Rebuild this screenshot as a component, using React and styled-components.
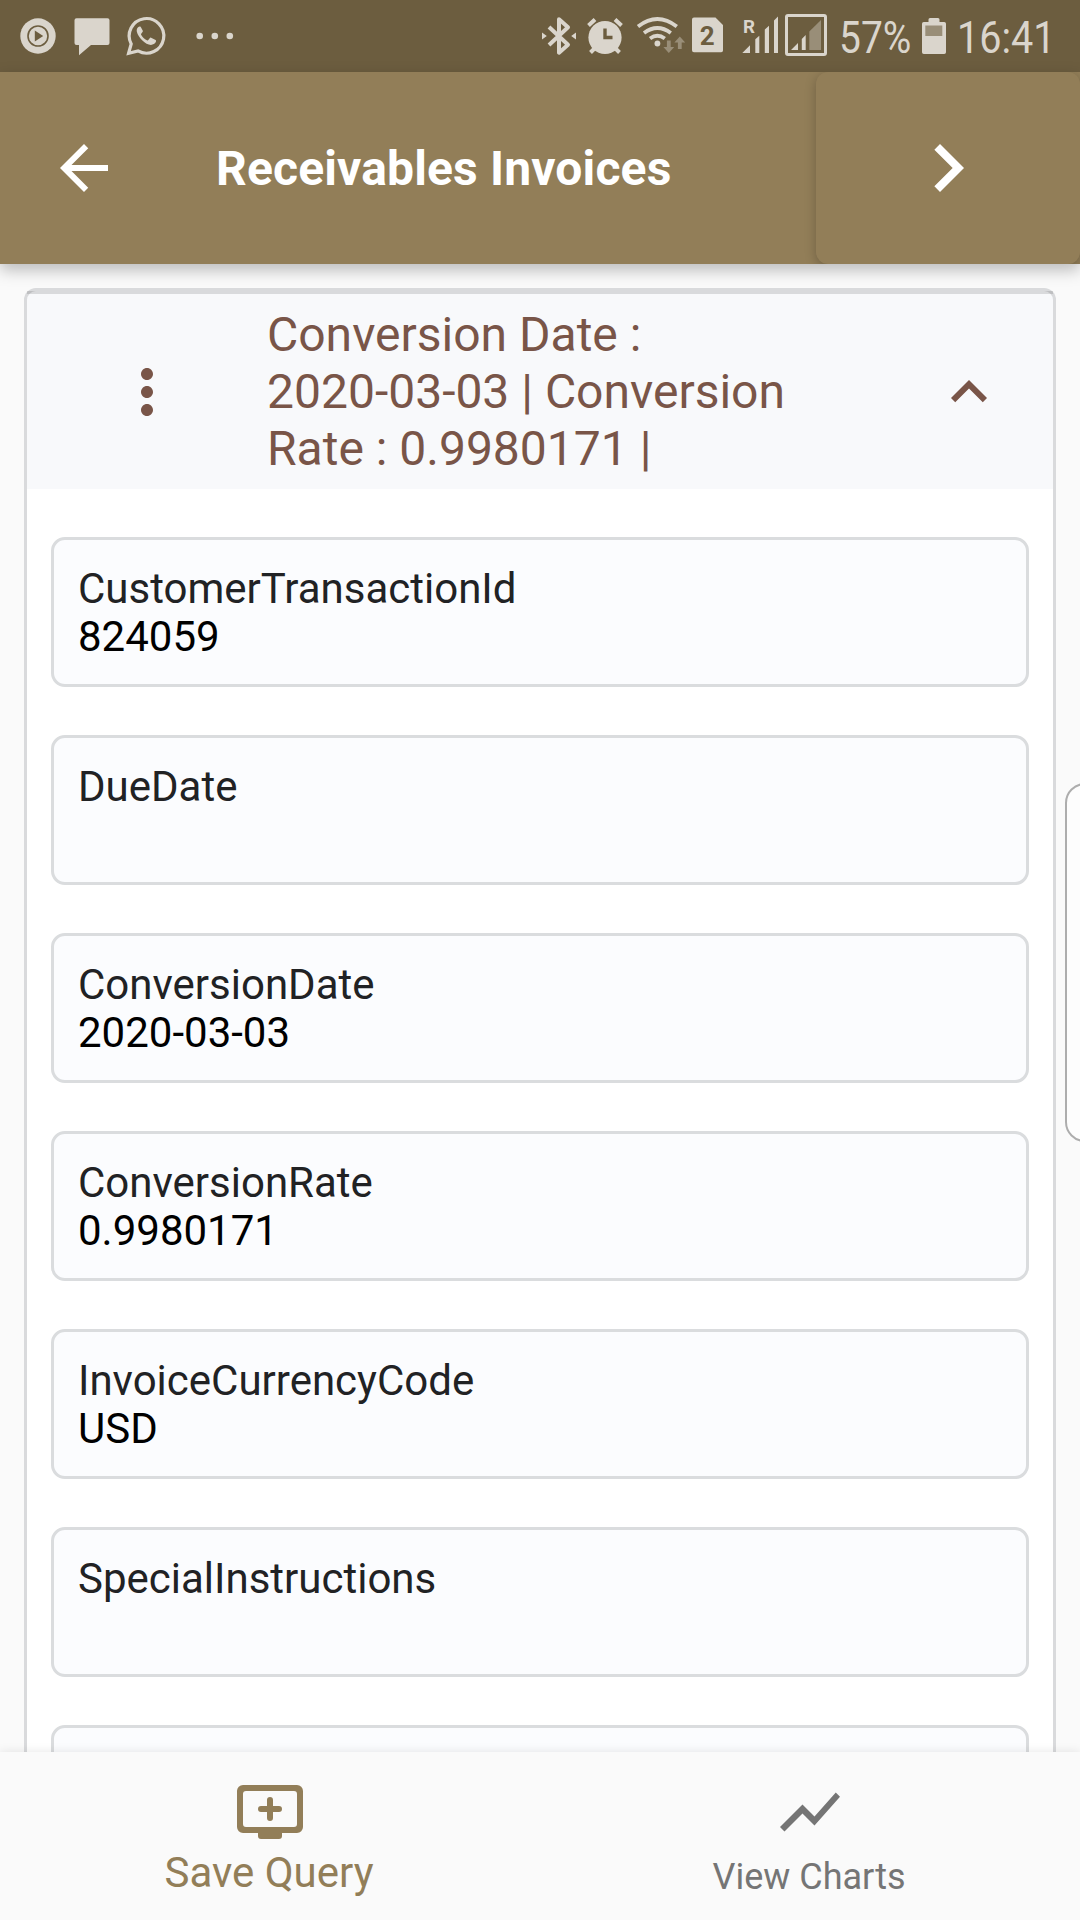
import React from "react";
import styled, { createGlobalStyle } from "styled-components";

const GlobalStyle = createGlobalStyle`
  * { box-sizing: border-box; }
  body { margin: 0; background: #fafafa; }
`;

const Screen = styled.div`
  position: relative;
  display: flex;
  flex-direction: column;
  width: 1080px;
  height: 1920px;
  overflow: hidden;
  background: #fafafa;
  font-family: Roboto, "Liberation Sans", sans-serif;
`;

const StatusBar = styled.header`
  display: flex;
  justify-content: space-between;
  flex: none;
  height: 72px;
  padding: 0 30px 0 14px;
  background: #6c5d3f;
  color: #dad5cc;
`;

const StatusGroup = styled.div`
  display: flex;
  height: 72px;
`;

const TileSvg = styled.svg`
  display: block;
  flex: none;
  fill: currentColor;
`;

const StatusText = styled.div`
  flex: none;
  width: ${(p) => p.$width}px;
  height: 72px;
  font-size: 45px;
  line-height: 75px;
  white-space: nowrap;

  span {
    display: inline-block;
    transform: scaleX(${(p) => p.$stretch});
    transform-origin: left center;
  }
`;

const AppBar = styled.div`
  position: relative;
  z-index: 2;
  display: flex;
  align-items: center;
  flex: none;
  height: 192px;
  padding-left: 48px;
  background: #927e58;
  color: #fff;
  box-shadow: 0 6px 15px rgba(0, 0, 0, 0.26);
`;

const AppBarTitle = styled.h1`
  flex: 1;
  margin: 0 0 0 96px;
  padding-top: 2px;
  font-size: 48px;
  font-weight: 700;
  line-height: 56px;
  letter-spacing: 0.15px;
  white-space: nowrap;
`;

const NextSlot = styled.div`
  width: 264px;
  height: 192px;
  clip-path: inset(0 0 0 -24px);
`;

const NextButton = styled.button`
  display: flex;
  align-items: center;
  justify-content: center;
  width: 100%;
  height: 100%;
  padding: 0;
  border: 0;
  border-radius: 12px;
  background: #927e58;
  color: #fff;
  box-shadow: 0 3px 12px rgba(0, 0, 0, 0.24);
`;

const Icon = styled.svg`
  display: block;
  flex: none;
  width: ${(p) => p.$size || 72}px;
  height: ${(p) => p.$size || 72}px;
  fill: currentColor;
`;

const Content = styled.main`
  flex: 1;
  min-height: 0;
  overflow: hidden;
  padding: 24px 24px 0;
`;

const Card = styled.section`
  border: 3px solid rgba(0, 0, 0, 0.12);
  border-radius: 12px;
  background: #f8f9fb;
`;

const CardDivider = styled.div`
  height: 3px;
  background: rgba(0, 0, 0, 0.12);
`;

const CardHeader = styled.div`
  display: flex;
  align-items: center;
  height: 195px;
  padding: 0 48px 0 84px;
  color: #795548;
`;

const CardTitle = styled.h2`
  flex: 1;
  margin: 0 0 0 84px;
  font-size: 48px;
  font-weight: 400;
  line-height: 57px;
  white-space: pre-line;
`;

const CardBody = styled.div`
  display: flex;
  flex-direction: column;
  gap: 48px;
  padding: 48px 24px;
  background: #fff;
`;

const Field = styled.div`
  flex: none;
  height: 150px;
  padding: 25px 24px 0;
  border: 3px solid #dadcde;
  border-radius: 14px;
  background: #fbfcfe;
  font-size: 42px;
  line-height: 48px;
`;

const FieldLabel = styled.div`
  color: #212224;
`;

const FieldValue = styled.div`
  color: #000;
`;

const EdgeHandle = styled.div`
  position: absolute;
  z-index: 1;
  top: 783px;
  left: 1065px;
  width: 60px;
  height: 359px;
  border: 2px solid #adadad;
  border-radius: 20px;
  background: #fdfdfd;
`;

const BottomNav = styled.nav`
  position: relative;
  z-index: 1;
  display: grid;
  grid-template-columns: 1fr 1fr;
  flex: none;
  height: 168px;
  background: #fafafa;
  box-shadow: 0 0 10px rgba(0, 0, 0, 0.1);
`;

const NavItem = styled.div`
  display: flex;
  flex-direction: column;
  align-items: center;
  gap: ${(p) => (p.$active ? 1 : 5)}px;
  padding-top: 24px;
  color: ${(p) => (p.$active ? "#927e58" : "#757575")};
  font-size: ${(p) => (p.$active ? 42 : 36)}px;
  line-height: 48px;
`;

const NavLabel = styled.span`
  padding-right: 2px;
  white-space: nowrap;
`;

function Tile({ x, w, children }) {
  return (
    <TileSvg width={w} height="72" viewBox={`${x} 0 ${w} 72`}>
      {children}
    </TileSvg>
  );
}

const BAR = "#6c5d3f";
const DIM = "#998e78";

function NotificationIcons() {
  return (
    <StatusGroup>
      <Tile x={14} w={48}>
        <circle cx="38" cy="36" r="17.7" />
        <circle cx="38" cy="36" r="10" fill="none" stroke={BAR} strokeWidth="1.6" />
        <path d="M34.8 30.6v10.8l8.4-5.4z" fill={BAR} />
      </Tile>
      <Tile x={62} w={56}>
        <path d="M76.500 18.300h31a2 2 0 0 1 2 2v22.700a2 2 0 0 1-2 2H91l-12 10.200V45h-2.500a2 2 0 0 1-2-2V20.300a2 2 0 0 1 2-2z" />
      </Tile>
      <Tile x={118} w={60}>
        <path
          d="M128.600 53.300l2.600-9.400a17.300 17.300 0 1 1 6.800 7z"
          fill="none"
          stroke="currentColor"
          strokeWidth="3.2"
        />
        <path d="M140.200 26.600c-.5-.2-1.500-.1-2.100.6-1 1-1.600 2.500-1.300 4.300.7 3.200 3 6.400 5.600 8.900 2.700 2.500 5.700 4.400 8.500 4.500 2 0 4.400-1.300 5-3.100.2-.9.200-1.500-.3-1.800l-4.500-2.300c-.6-.2-1 0-1.400.5l-1.400 1.800c-.4.5-.9.5-1.400.2-2.500-1.200-4.400-3-5.800-5.500-.2-.5-.1-.8.3-1.200l1.300-1.700c.2-.4.200-.7 0-1.200l-1.800-3.400c-.2-.4-.4-.5-.7-.6z" />
      </Tile>
      <Tile x={178} w={62}>
        <circle cx="199.700" cy="36" r="3.300" />
        <circle cx="214.800" cy="36" r="3.300" />
        <circle cx="229.800" cy="36" r="3.300" />
      </Tile>
    </StatusGroup>
  );
}

function SystemIcons() {
  return (
    <StatusGroup>
      <Tile x={536} w={46}>
        <path
          d="M549 27l19 17.700-9 8V19.300l9 8L549 45"
          fill="none"
          stroke="currentColor"
          strokeWidth="4"
          strokeLinejoin="round"
        />
        <path d="M542 32.500l4.800 3.500-4.800 3.500zM576 32.500L571.200 36l4.800 3.500z" />
      </Tile>
      <Tile x={582} w={50}>
        <circle cx="605" cy="37.500" r="16.600" />
        <path
          d="M588.500 25.500l6.500-6M621.500 25.500l-6.500-6M594.500 48.500l-4 4M615.500 48.500l4 4"
          fill="none"
          stroke="currentColor"
          strokeWidth="4"
        />
        <path d="M605 28.500v9h7.500" fill="none" stroke={BAR} strokeWidth="3.400" />
      </Tile>
      <Tile x={632} w={56}>
        <path
          d="M638 26.500q19.400-15 38.800 0M644 33q13.400-10 26.800 0M650 38.500q7.400-5.500 14.800 0"
          fill="none"
          stroke="currentColor"
          strokeWidth="3.800"
        />
        <circle cx="657.400" cy="43.500" r="2.900" />
        <g fill={DIM}>
          <path d="M666.900 40.500h3.800v6.500h3.500l-5.400 6-5.400-6h3.500z" />
          <path d="M677.900 49h3.800v-6.500h3.500l-5.400-6-5.400 6h3.500z" />
        </g>
      </Tile>
      <Tile x={688} w={50}>
        <path d="M694 17.500h21.500l7.500 7.500v25.500a1.800 1.800 0 0 1-1.800 1.800H694a2 2 0 0 1-2-2V19.500a2 2 0 0 1 2-2z" />
        <text x="707.300" y="45" fontSize="26" fontWeight="700" textAnchor="middle" fill={BAR}>
          2
        </text>
      </Tile>
      <Tile x={738} w={44}>
        <text x="743" y="32.500" fontSize="18" fontWeight="700" textLength="12" lengthAdjust="spacingAndGlyphs">
          R
        </text>
        <path d="M742.300 53l7.700-7.700V53zM755.300 39.200l4-3.500V53h-4zM764.800 29.500l4.200-3.800V53h-4.200zM774 20.500l4-4V53h-4z" />
      </Tile>
      <Tile x={782} w={57}>
        <rect x="786.500" y="15.500" width="39" height="39" rx="1.500" fill="none" stroke="currentColor" strokeWidth="3" />
        <path d="M791 50l7-7v7zM801.800 39l3.900-3.900V50h-3.900z" />
        <path d="M809.300 31.500L821 20v30h-11.700z" fill={DIM} />
      </Tile>
      <StatusText $width={77} $stretch={0.865}>
        <span>57%</span>
      </StatusText>
      <Tile x={916} w={41}>
        <path d="M928.500 22v-2.500a1.500 1.500 0 0 1 1.500-1.500h8a1.500 1.500 0 0 1 1.500 1.500V22h4.700a1.800 1.800 0 0 1 1.800 1.800v28.400a1.800 1.800 0 0 1-1.800 1.800h-20.400a1.800 1.800 0 0 1-1.800-1.800V23.800a1.800 1.800 0 0 1 1.800-1.800z" />
        <rect x="925.300" y="25.500" width="17" height="10.500" fill={DIM} />
      </Tile>
      <StatusText $width={93} $stretch={0.88}>
        <span>16:41</span>
      </StatusText>
    </StatusGroup>
  );
}

const fields = [
  { label: "CustomerTransactionId", value: "824059" },
  { label: "DueDate", value: "" },
  { label: "ConversionDate", value: "2020-03-03" },
  { label: "ConversionRate", value: "0.9980171" },
  { label: "InvoiceCurrencyCode", value: "USD" },
  { label: "SpecialInstructions", value: "" },
  { label: "", value: "" },
];

export default function App() {
  return (
    <Screen>
      <GlobalStyle />
      <StatusBar>
        <NotificationIcons />
        <SystemIcons />
      </StatusBar>

      <AppBar>
        <Icon viewBox="0 0 24 24">
          <path d="M20 11H7.830l5.590-5.590L12 4l-8 8 8 8 1.410-1.410L7.830 13H20v-2z" />
        </Icon>
        <AppBarTitle>Receivables Invoices</AppBarTitle>
        <NextSlot>
          <NextButton aria-label="Next">
            <Icon $size={96} viewBox="0 0 24 24">
              <path d="M10 6L8.590 7.410 13.170 12l-4.580 4.590L10 18l6-6z" />
            </Icon>
          </NextButton>
        </NextSlot>
      </AppBar>

      <Content>
        <Card>
          <CardDivider />
          <CardHeader>
            <Icon viewBox="0 0 24 24">
              <path d="M12 8c1.100 0 2-.9 2-2s-.9-2-2-2-2 .9-2 2 .9 2 2 2zm0 2c-1.100 0-2 .9-2 2s.9 2 2 2 2-.9 2-2-.9-2-2-2zm0 6c-1.100 0-2 .9-2 2s.9 2 2 2 2-.9 2-2-.9-2-2-2z" />
            </Icon>
            <CardTitle>{"Conversion Date :\n2020-03-03 | Conversion\nRate : 0.9980171 |"}</CardTitle>
            <Icon viewBox="0 0 24 24">
              <path d="M12 8l-6 6 1.410 1.410L12 10.830l4.590 4.580L18 14z" />
            </Icon>
          </CardHeader>
          <CardBody>
            {fields.map((f, i) => (
              <Field key={i}>
                <FieldLabel>{f.label}</FieldLabel>
                <FieldValue>{f.value}</FieldValue>
              </Field>
            ))}
          </CardBody>
        </Card>
      </Content>

      <EdgeHandle />

      <BottomNav>
        <NavItem $active>
          <Icon viewBox="0 0 24 24">
            <path
              fillRule="evenodd"
              d="M3 3h18a2 2 0 0 1 2 2v12a2 2 0 0 1-2 2h-5v1a1 1 0 0 1-1 1H9a1 1 0 0 1-1-1v-1H3a2 2 0 0 1-2-2V5a2 2 0 0 1 2-2zm1 2a1 1 0 0 0-1 1v10a1 1 0 0 0 1 1h16a1 1 0 0 0 1-1V6a1 1 0 0 0-1-1z"
            />
            <path d="M12 7a1 1 0 0 1 1 1v2h2a1 1 0 0 1 0 2h-2v2a1 1 0 0 1-2 0v-2H9a1 1 0 0 1 0-2h2V8a1 1 0 0 1 1-1z" />
          </Icon>
          <NavLabel>Save Query</NavLabel>
        </NavItem>
        <NavItem>
          <Icon viewBox="0 0 24 24">
            <path d="M3.500 18.490l6-6.010 4 4L22 6.920l-1.410-1.410-7.090 7.970-4-4L2 16.990z" />
          </Icon>
          <NavLabel>View Charts</NavLabel>
        </NavItem>
      </BottomNav>
    </Screen>
  );
}
